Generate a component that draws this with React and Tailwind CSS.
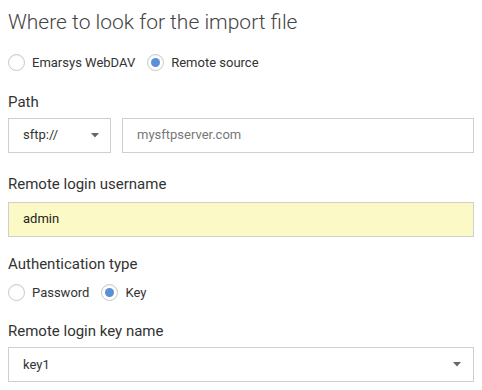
import React from "react";

function Radio({ checked, label }) {
  return (
    <label className="flex items-center gap-[7px]">
      <span className="flex h-[17px] w-[17px] items-center justify-center rounded-full border border-[#c8c8c8] bg-white shadow-[inset_0_1px_1px_rgba(0,0,0,0.06)]">
        {checked && <span className="h-[9px] w-[9px] rounded-full bg-[#5b8fd6]" />}
      </span>
      <span className="text-[13px] text-[#333]">{label}</span>
    </label>
  );
}

function Caret() {
  return (
    <svg width="8" height="5" viewBox="0 0 8 5">
      <path d="M0 0 L8 0 L4 4.5 Z" fill="#666" />
    </svg>
  );
}

export default function App() {
  return (
    <div className="h-[390px] w-[482px] bg-white px-2 font-['Roboto',sans-serif] text-[#333]">
      <h1 className="pt-[8px] text-[21px] font-light leading-[28px] text-[#444]">
        Where to look for the import file
      </h1>
      <div className="mt-[17px] flex items-center gap-[12px] pl-[0px]">
        <Radio label="Emarsys WebDAV" />
        <Radio checked label="Remote source" />
      </div>
      <div className="mt-[19px] text-[15px] leading-[20px]">Path</div>
      <div className="mt-[6px] flex gap-[11px]">
        <div className="flex h-[35px] w-[103px] items-center justify-between border border-[#cfcfcf] pl-[14px] pr-[11px] text-[13px]">
          <span>sftp://</span>
          <Caret />
        </div>
        <div className="flex h-[35px] w-[352px] items-center border border-[#cfcfcf] px-[14px] text-[13px] text-[#777]">
          mysftpserver.com
        </div>
      </div>
      <div className="mt-[21px] text-[15px] leading-[20px]">Remote login username</div>
      <div className="mt-[8px] flex h-[35px] w-[466px] items-center border border-[#cfcfcf] bg-[#fbfac6] px-[14px] text-[13px] text-[#222]">
        admin
      </div>
      <div className="mt-[17px] text-[15px] leading-[20px]">Authentication type</div>
      <div className="mt-[9px] flex items-center gap-[12px]">
        <Radio label="Password" />
        <Radio checked label="Key" />
      </div>
      <div className="mt-[19px] text-[15px] leading-[20px]">Remote login key name</div>
      <div className="mt-[6px] flex h-[35px] w-[466px] items-center justify-between border border-[#cfcfcf] pl-[14px] pr-[12px] text-[13px]">
        <span>key1</span>
        <Caret />
      </div>
    </div>
  );
}
